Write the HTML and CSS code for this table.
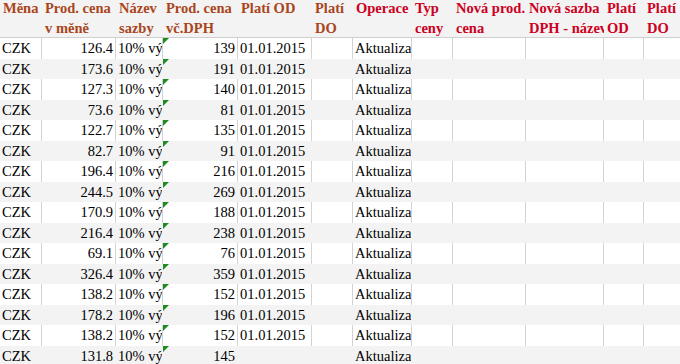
FILE: index.html
```html
<!DOCTYPE html>
<html lang="cs">
<head>
<meta charset="utf-8">
<title>Ceník</title>
<link rel="stylesheet" href="styles.css">
</head>
<body>
<div class="sheet">
  <div class="row head">
    <div class="c brown">Měna</div>
    <div class="c brown">Prod. cena<br>v měně</div>
    <div class="c brown">Název<br>sazby</div>
    <div class="c brown">Prod. cena<br>vč.DPH</div>
    <div class="c brown">Platí OD</div>
    <div class="c brown">Platí<br>DO</div>
    <div class="c red">Operace</div>
    <div class="c red">Typ<br>ceny</div>
    <div class="c red">Nová prod.<br>cena</div>
    <div class="c red">Nová sazba<br>DPH - název</div>
    <div class="c red">Platí<br>OD</div>
    <div class="c red">Platí<br>DO</div>
  </div>
</div>
<script src="app.js"></script>
</body>
</html>
```
FILE: app.js
```js
const data = [
  ["126.4", "139", "01.01.2015"],
  ["173.6", "191", "01.01.2015"],
  ["127.3", "140", "01.01.2015"],
  ["73.6", "81", "01.01.2015"],
  ["122.7", "135", "01.01.2015"],
  ["82.7", "91", "01.01.2015"],
  ["196.4", "216", "01.01.2015"],
  ["244.5", "269", "01.01.2015"],
  ["170.9", "188", "01.01.2015"],
  ["216.4", "238", "01.01.2015"],
  ["69.1", "76", "01.01.2015"],
  ["326.4", "359", "01.01.2015"],
  ["138.2", "152", "01.01.2015"],
  ["178.2", "196", "01.01.2015"],
  ["138.2", "152", "01.01.2015"],
  ["131.8", "145", ""]
];
const sheet = document.querySelector(".sheet");
data.forEach((d, i) => {
  const row = document.createElement("div");
  row.className = "row " + (i % 2 ? "band" : "plain");
  const cells = [
    ["CZK", ""],
    [d[0], "num"],
    ["10% výstup", ""],
    [d[1], "num flag"],
    [d[2], ""],
    ["", ""],
    ["Aktualizace", ""],
    ["", ""], ["", ""], ["", ""], ["", ""], ["", ""]
  ];
  cells.forEach(([t, cls]) => {
    const c = document.createElement("div");
    c.className = "c " + cls;
    c.textContent = t;
    row.appendChild(c);
  });
  sheet.appendChild(row);
});
```
FILE: styles.css
```css
html, body {
  margin: 0;
  padding: 0;
  background: #ffffff;
  font-family: "Liberation Serif", Tinos, "Times New Roman", Times, "DejaVu Serif", serif;
}
.sheet {
  width: 684px;
  font-family: "Liberation Serif", Tinos, "Times New Roman", Times, "DejaVu Serif", serif;
  font-size: 14.5px;
  color: #000000;
}
.row {
  display: grid;
  grid-template-columns: 42px 74px 47px 75px 74px 41px 59px 41px 73px 78px 40px 40px;
  height: 20.5px;
}
.c {
  box-sizing: border-box;
  overflow: hidden;
  white-space: nowrap;
  padding: 0 2px;
  line-height: 20.5px;
}
.head {
  height: 38px;
  background: #f3f3f3;
  border-bottom: 1px solid #cfcfcf;
  box-sizing: border-box;
}
.head .c {
  font-weight: bold;
  line-height: 20px;
  margin-top: -2px;
  padding: 0 3px;
}
.brown { color: #a9451b; }
.red { color: #cc0022; }
.plain { background: #ffffff; }
.plain .c { border-right: 1px solid #d3d3d3; }
.band { background: #f3f3f3; }
.band .c { border-right: 1px solid transparent; }
.num { text-align: right; }
.flag { position: relative; }
.flag::before {
  content: "";
  position: absolute;
  left: 0;
  top: 0;
  width: 0;
  height: 0;
  border-top: 6px solid #1c8c1c;
  border-right: 6px solid transparent;
}
```
